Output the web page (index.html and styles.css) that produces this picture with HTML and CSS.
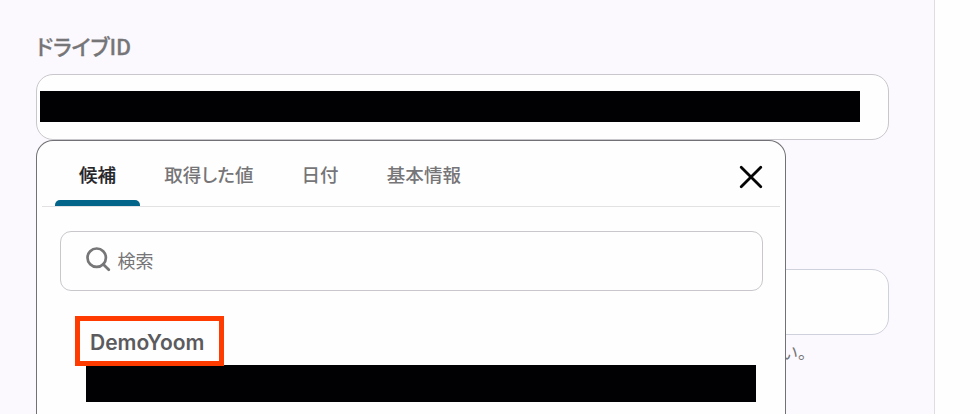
FILE: index.html
```html
<!DOCTYPE html>
<html lang="ja">
  <head>
    <meta charset="UTF-8" />
    <meta name="viewport" content="width=device-width, initial-scale=1.0" />
    <title>ドライブID</title>
    <link rel="stylesheet" href="styles.css">
  </head>
  <body>
    <div class="panel">
      <div class="field">
        <div class="label">ドライブID</div>
        <div class="input">
          <div class="mask"></div>
        </div>

        <!-- 候補のドロップダウン -->
        <div class="dropdown">
          <div class="header">
            <ul class="tabs">
              <li class="active">候補</li>
              <li>取得した値</li>
              <li>日付</li>
              <li>基本情報</li>
            </ul>
            <svg class="close" width="24" height="24" viewBox="0 0 24 24">
              <path d="M2.2 2.2L21.8 21.8M21.8 2.2L2.2 21.8" />
            </svg>
          </div>
          <div class="search">
            <svg class="search-icon" width="26" height="26" viewBox="0 0 26 26">
              <circle cx="11.7" cy="10.7" r="9.2" />
              <path d="M18.2 17.2L23.8 22.8" />
            </svg>
            <span>検索</span>
          </div>
          <div class="option">
            <div class="option-name">DemoYoom</div>
            <div class="option-mask"></div>
          </div>
        </div>
      </div>

      <div class="field">
        <div class="input"></div>
        <div class="hint">い。</div>
      </div>
    </div>
  </body>
</html>
```

FILE: styles.css
```css
* {
  box-sizing: border-box;
}

body {
  margin: 0;
  height: 414px;
  background-color: #fefefe;
  color: #767577;
  font-family: "Noto Sans CJK JP", sans-serif;
}

ul {
  list-style: none;
  padding: 0;
  margin: 0;
}

svg {
  display: block;
  fill: none;
  stroke-linecap: round;
}

.panel {
  width: 935px;
  height: 414px;
  padding: 30px 45px 0 36px;
  background-color: #fbf9fd;
  border-right: 1px solid #dfdde3;
}

.field {
  position: relative;
  width: 853px;
}
.field + .field {
  margin-top: 129px;
}

.label {
  height: 44px;
  line-height: 31px;
  font-size: 21.5px;
  font-weight: 500;
  font-feature-settings: "palt";
  -webkit-text-stroke: 0.3px;
}

.input {
  height: 66px;
  padding: 16px 3px;
  background-color: #fefefe;
  border: 1px solid #c9c7cb;
  border-radius: 17px;
}
.field + .field .input {
  border-color: #cfd1dc;
}

.mask {
  width: 820px;
  height: 31px;
  background-color: #010003;
}

.hint {
  padding: 6px 0 0 745px;
  font-size: 17px;
  line-height: 22px;
}

.dropdown {
  position: absolute;
  z-index: 1;
  top: 110px;
  left: 0;
  width: 750px;
  height: 274px;
  padding: 0 5px;
  background-color: #fefefe;
  border: 1px solid #727175;
  border-bottom: 0;
  border-radius: 17px 17px 0 0;
}

.header {
  display: flex;
  justify-content: space-between;
  height: 66px;
  padding: 0 17px 0 13px;
  border-bottom: 1px solid #e2e2e4;
}

.tabs {
  display: flex;
  height: 65px;
}
.tabs li {
  padding: 0 24px;
  font-size: 18.5px;
  font-weight: 500;
  letter-spacing: 0.1px;
  line-height: 66px;
  font-feature-settings: "palt";
}
.tabs li.active {
  position: relative;
  color: #252428;
  -webkit-text-stroke: 0.2px;
}
.tabs li.active::after {
  content: "";
  position: absolute;
  left: 0;
  right: 0;
  bottom: 0;
  height: 6px;
  border-radius: 5px 5px 0 0;
  background-color: #04658a;
}

.close {
  margin-top: 24px;
  stroke: #050505;
  stroke-width: 2.8;
}

.search {
  display: flex;
  align-items: center;
  width: 703px;
  height: 60px;
  margin: 24px 0 0 18px;
  padding: 0 24px;
  border: 1px solid #c9c7cb;
  border-radius: 11px;
  font-size: 18px;
}
.search span {
  margin-top: -2px;
}

.search-icon {
  margin: -2px 6.5px 0 0;
  stroke: #767577;
  stroke-width: 2.7;
}

.option {
  margin: 25px 0 0 33px;
}

.option-name {
  position: relative;
  width: 149px;
  height: 50px;
  padding-left: 10px;
  border: 5px solid #ff3b00;
  color: #5b5a5d;
  font-family: Inter, sans-serif;
  font-size: 21px;
  font-weight: 600;
  line-height: 43px;
}

.option-mask {
  width: 670px;
  height: 37px;
  margin: -1px 0 0 11px;
  background-color: #010003;
}
```
